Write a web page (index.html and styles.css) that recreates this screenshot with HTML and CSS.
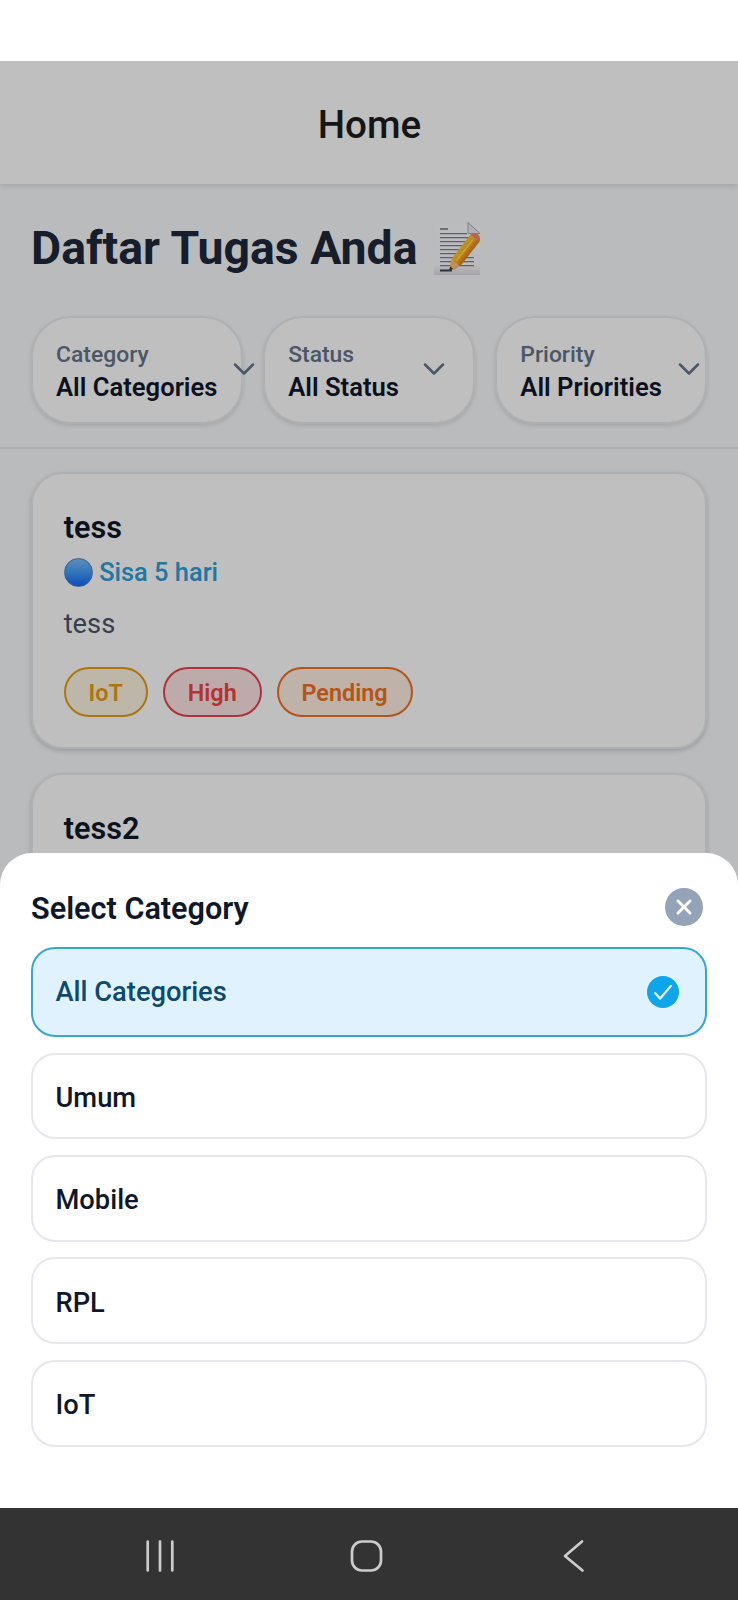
FILE: index.html
```
<!DOCTYPE html>
<html lang="id">
<head>
<meta charset="utf-8">
<title>Home</title>
<link rel="stylesheet" href="styles.css">
</head>
<body>
<div class="status-bar"></div>
<div class="stage">
  <div class="screen">
    <header class="app-bar"><h1 class="app-bar-title">Home</h1></header>
    <section class="top">
      <div class="heading-row">
        <h2 class="heading">Daftar Tugas Anda</h2>
        <svg class="memo" viewBox="0 0 50 56">
          <defs>
            <linearGradient id="paper" x1="0" y1="0" x2="0" y2="1"><stop offset="0" stop-color="#fafbfd"/><stop offset=".8" stop-color="#fafafc"/><stop offset="1" stop-color="#dcdce2"/></linearGradient>
            <linearGradient id="pencil" x1=".25" y1=".3" x2=".7" y2=".7"><stop offset="0" stop-color="#ffd23e"/><stop offset=".5" stop-color="#ffb01c"/><stop offset="1" stop-color="#c8641c"/></linearGradient>
          </defs>
          <path fill="url(#paper)" d="M2 3h34l12 12v39H2z"/>
          <path stroke="#6b7078" stroke-width="1.5" d="M8 8h8"/>
          <path stroke="#7d8189" stroke-width="1.3" d="M8 12.700h27M8 16.700h29M8 20.700h26M8 24.700h23M8 28.700h20M8 32.700h18M8 36.700h34M8 40.700h34M8 44.700h34"/>
          <path stroke="#3d4048" stroke-width="2" d="M8 49.500h12"/>
          <path fill="#e9ebef" stroke="#a1a5ad" stroke-width=".9" d="M36 1.500v11h12z"/>
          <path fill="#8f6748" opacity=".45" d="M20 49l4-1 24-28v-4z"/>
          <path fill="url(#pencil)" d="M19.500 38L38 14l9.500 6.500L28 45.500z"/>
          <path stroke="#ffdc57" stroke-width="1.500" d="M24.500 39.500L41 18.500"/>
          <path fill="#f08a5c" d="M38 14q3-3 7-1.500 4 2.500 2.500 8z"/>
          <path fill="#ffc070" d="M19.500 38l8.500 7.500-11 4z"/>
          <path fill="#39302d" d="M18.300 45.500l2.700 2.500-4 1.500z"/>
        </svg>
      </div>
      <div class="filters">
        <div class="filter"><div class="filter-text"><span class="filter-label">Category</span><span class="filter-value">All Categories</span></div>
          <svg class="chevron" viewBox="0 0 22 12"><path d="M2 1.500l9 9L20 1.500"/></svg></div>
        <div class="filter"><div class="filter-text"><span class="filter-label">Status</span><span class="filter-value">All Status</span></div>
          <svg class="chevron" viewBox="0 0 22 12"><path d="M2 1.500l9 9L20 1.500"/></svg></div>
        <div class="filter"><div class="filter-text"><span class="filter-label">Priority</span><span class="filter-value">All Priorities</span></div>
          <svg class="chevron" viewBox="0 0 22 12"><path d="M2 1.500l9 9L20 1.500"/></svg></div>
      </div>
    </section>
    <main class="tasks">
      <article class="task">
        <h3 class="task-title">tess</h3>
        <div class="due"><span class="due-dot"></span>Sisa 5 hari</div>
        <p class="task-note">tess</p>
        <div class="tags"><span class="tag tag-iot">IoT</span><span class="tag tag-high">High</span><span class="tag tag-pending">Pending</span></div>
      </article>
      <article class="task"><h3 class="task-title">tess2</h3></article>
    </main>
  </div>
  <div class="backdrop"></div>
  <section class="sheet">
    <div class="sheet-head">
      <h2 class="sheet-title">Select Category</h2>
      <svg class="close" viewBox="0 0 38 38"><circle cx="19" cy="19" r="19" fill="#94a3b8"/><path d="M13 13l12 12M25 13L13 25" stroke="#fff" stroke-width="2.900" stroke-linecap="round"/></svg>
    </div>
    <div class="options">
      <div class="option option-selected">All Categories
        <svg class="check" viewBox="0 0 32 32"><circle cx="16" cy="16" r="16" fill="#0ea5e9"/><path d="M8.200 17.200l5 5.400L23.800 10" fill="none" stroke="#e0f2fe" stroke-width="2.300" stroke-linecap="round" stroke-linejoin="round"/></svg></div>
      <div class="option">Umum</div>
      <div class="option">Mobile</div>
      <div class="option">RPL</div>
      <div class="option">IoT</div>
    </div>
  </section>
</div>
<nav class="nav-bar">
  <svg class="nav-icon" viewBox="0 0 34 34"><path d="M4.700 2.500v29M17 2.500v29M29.300 2.500v29"/></svg>
  <svg class="nav-icon" viewBox="0 0 34 34"><rect x="2" y="2.500" width="29" height="29" rx="10"/></svg>
  <svg class="nav-icon" viewBox="0 0 34 34"><path d="M25 2.500L8 17l17.500 14.500"/></svg>
</nav>
</body>
</html>
```
FILE: styles.css
```
* { box-sizing: border-box; }
body { margin: 0; width: 738px; height: 1600px; overflow: hidden; background: #fff; font-family: Roboto, "Liberation Sans", sans-serif; color: #0f172a; }
h1, h2, h3, p { margin: 0; }
svg { display: block; flex: none; }
.status-bar { height: 61px; }
.stage { position: relative; height: 1447px; overflow: hidden; }
.screen { height: 100%; background: #f8fafc; }
.backdrop { position: absolute; inset: 0; background: rgba(0, 0, 0, .25); }

.app-bar { position: relative; display: flex; align-items: center; justify-content: center; height: 123px; background: #fff; box-shadow: 0 1px 7px rgba(0, 0, 0, .16); }
.app-bar-title { padding: 4px 0 0 1px; font-size: 38.600px; font-weight: 500; line-height: 46px; color: #1c1c1e; }

.top { height: 265px; padding: 35px 31px 0; border-bottom: 2px solid #e6e9ed; }
.heading-row { display: flex; gap: 14px; height: 60px; }
.heading { font-size: 46.400px; font-weight: 700; line-height: 58px; color: #1e293b; white-space: nowrap; }
.memo { width: 50px; height: 56px; margin-top: 2px; }
.filters { display: flex; gap: 20.500px; margin-top: 37px; }
.filter { display: flex; flex: 1 1 0; min-width: 0; align-items: center; justify-content: space-between; height: 108px; padding: 0 28px 0 23px; border: 2px solid #e9edf1; border-radius: 40px; background: #fff; box-shadow: 0 2px 4px rgba(15, 23, 42, .13); }
.filter-text { display: flex; flex: none; flex-direction: column; }
.filter-label { padding-top: 1px; font-size: 22.900px; font-weight: 500; line-height: 33px; color: #64748b; }
.filter-value { font-size: 25.600px; font-weight: 600; line-height: 33px; white-space: nowrap; }
.chevron { width: 22px; height: 12px; margin: 0 0 2px 16px; }
.chevron path { fill: none; stroke: #64748b; stroke-width: 2.500; stroke-linecap: round; stroke-linejoin: round; }

.tasks { display: flex; flex-direction: column; gap: 24px; padding: 23px 31px; }
.task { height: 277px; padding: 36px 30.700px; border: 2px solid #e9edf1; border-radius: 32px; background: #fff; box-shadow: 0 2px 5px rgba(15, 23, 42, .2); flex: none; }
.task-title { font-size: 30.600px; font-weight: 600; line-height: 36px; }
.due { display: flex; align-items: center; gap: 6.500px; height: 36px; margin-top: 8px; font-size: 25.400px; font-weight: 500; color: #2ba0d8; }
.due-dot { width: 29px; height: 29px; border: 1px solid #4a7fc0; border-radius: 50%; background: linear-gradient(#7cbcfa, #4aa0fa 45%, #1068f8); }
.task-note { margin-top: 17px; font-size: 27.300px; line-height: 34px; color: #475569; }
.tags { display: flex; gap: 15px; margin-top: 26px; }
.tag { height: 50px; padding: 0 22.900px; border: 2px solid; border-radius: 25px; font-size: 23.400px; font-weight: 600; line-height: 48px; }
.tag-iot { color: #ea9a16; background: #fdf4e2; }
.tag-high { color: #ef4444; border-color: #e9424f; background: #fde3e3; }
.tag-pending { color: #f07020; background: #feeee2; }

.sheet { position: absolute; left: 0; right: 0; bottom: 0; height: 655px; padding: 34px 31px 0; border-radius: 32px 32px 0 0; background: #fff; }
.sheet-head { display: flex; align-items: center; justify-content: space-between; height: 40px; padding-right: 4px; }
.sheet-title { padding-top: 4px; font-size: 30.600px; font-weight: 600; line-height: 40px; }
.close { width: 38px; height: 38px; }
.options { display: flex; flex-direction: column; gap: 15.500px; margin-top: 20px; }
.option { display: flex; align-items: center; justify-content: space-between; height: 86.900px; padding: 4px 26.500px 0 22.500px; border: 2px solid #e5e7eb; border-radius: 24px; font-size: 27.300px; font-weight: 500; }
.option-selected { height: 90px; padding-top: 0; border-color: #38a6d4; background: #e0f2fe; color: #0c4a6e; }
.check { width: 32px; height: 32px; }

.nav-bar { display: grid; grid-template-columns: 1fr 1fr 1fr; padding: 31px 61px 0 56px; justify-items: center; height: 92px; background: #333; }
.nav-icon { width: 34px; height: 34px; fill: none; stroke: #ccc; stroke-width: 2.700; stroke-linecap: round; stroke-linejoin: round; }
```
